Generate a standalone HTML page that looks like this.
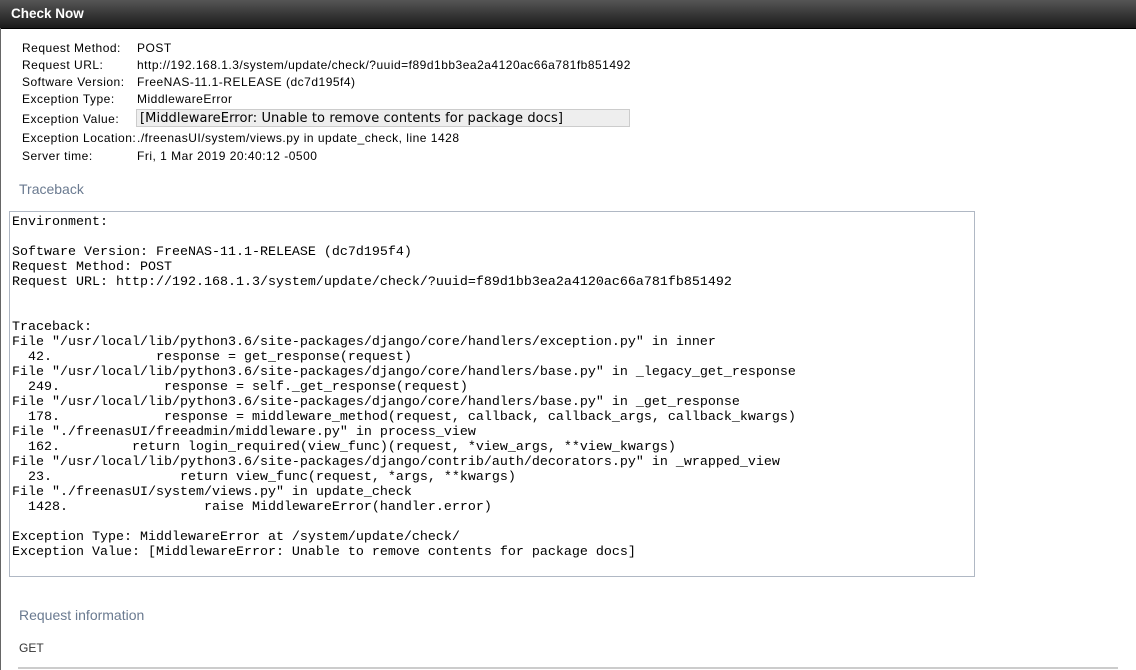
<!DOCTYPE html>
<html><head><style>
body{margin:0;width:1136px;height:670px;overflow:hidden;background:#fff;font-family:"Liberation Sans",sans-serif;position:relative}
.bar{position:absolute;left:0;top:0;width:1136px;height:28px;background:linear-gradient(#555,#1a1a1a);border-bottom:1px solid #000}
.bar span{position:absolute;left:11px;top:6px;color:#fff;font-weight:bold;font-size:13.5px}
.lb{position:absolute;left:0;top:28px;width:1px;height:642px;background:#666}
.row{position:absolute;left:22px;font-size:12px;letter-spacing:.5px;color:#000;white-space:nowrap}
.row b{font-weight:normal;position:absolute;left:115px}
.ev{position:absolute;left:136px;top:109px;width:494px;height:18px;background:#eee;border:1px solid #ccc;font-family:"DejaVu Sans",sans-serif;font-size:13px;letter-spacing:.1px;line-height:17px;padding-left:3px;box-sizing:border-box;white-space:nowrap}
h3{position:absolute;margin:0;font-weight:normal;font-size:14px;color:#6a7a90}
pre{position:absolute;left:9px;top:211px;width:966px;height:366px;margin:0;border:1px solid #b0b8c4;box-sizing:border-box;padding:3px 2px;font-family:"Liberation Mono",monospace;font-size:13.33px;line-height:15px;color:#000}
.get{position:absolute;left:19px;top:641px;font-size:12px;color:#333}
.hr{position:absolute;left:18px;top:667px;width:1100px;height:2px;background:#ccc}
</style></head><body>
<div class="bar"><span>Check Now</span></div>
<div class="lb"></div>
<div class="row" style="top:41px">Request Method:<b>POST</b></div>
<div class="row" style="top:58px">Request URL:<b>http://192.168.1.3/system/update/check/?uuid=f89d1bb3ea2a4120ac66a781fb851492</b></div>
<div class="row" style="top:75px">Software Version:<b>FreeNAS-11.1-RELEASE (dc7d195f4)</b></div>
<div class="row" style="top:92px">Exception Type:<b>MiddlewareError</b></div>
<div class="row" style="top:112px">Exception Value:</div>
<div class="ev">[MiddlewareError: Unable to remove contents for package docs]</div>
<div class="row" style="top:131px">Exception Location:<b>./freenasUI/system/views.py in update_check, line 1428</b></div>
<div class="row" style="top:149px">Server time:<b>Fri, 1 Mar 2019 20:40:12 -0500</b></div>
<h3 style="left:19px;top:181px">Traceback</h3>
<pre>Environment:

Software Version: FreeNAS-11.1-RELEASE (dc7d195f4)
Request Method: POST
Request URL: http://192.168.1.3/system/update/check/?uuid=f89d1bb3ea2a4120ac66a781fb851492


Traceback:
File "/usr/local/lib/python3.6/site-packages/django/core/handlers/exception.py" in inner
  42.             response = get_response(request)
File "/usr/local/lib/python3.6/site-packages/django/core/handlers/base.py" in _legacy_get_response
  249.             response = self._get_response(request)
File "/usr/local/lib/python3.6/site-packages/django/core/handlers/base.py" in _get_response
  178.             response = middleware_method(request, callback, callback_args, callback_kwargs)
File "./freenasUI/freeadmin/middleware.py" in process_view
  162.         return login_required(view_func)(request, *view_args, **view_kwargs)
File "/usr/local/lib/python3.6/site-packages/django/contrib/auth/decorators.py" in _wrapped_view
  23.                return view_func(request, *args, **kwargs)
File "./freenasUI/system/views.py" in update_check
  1428.                 raise MiddlewareError(handler.error)

Exception Type: MiddlewareError at /system/update/check/
Exception Value: [MiddlewareError: Unable to remove contents for package docs]
</pre>
<h3 style="left:19px;top:607px">Request information</h3>
<div class="get">GET</div>
<div class="hr"></div>
</body></html>
